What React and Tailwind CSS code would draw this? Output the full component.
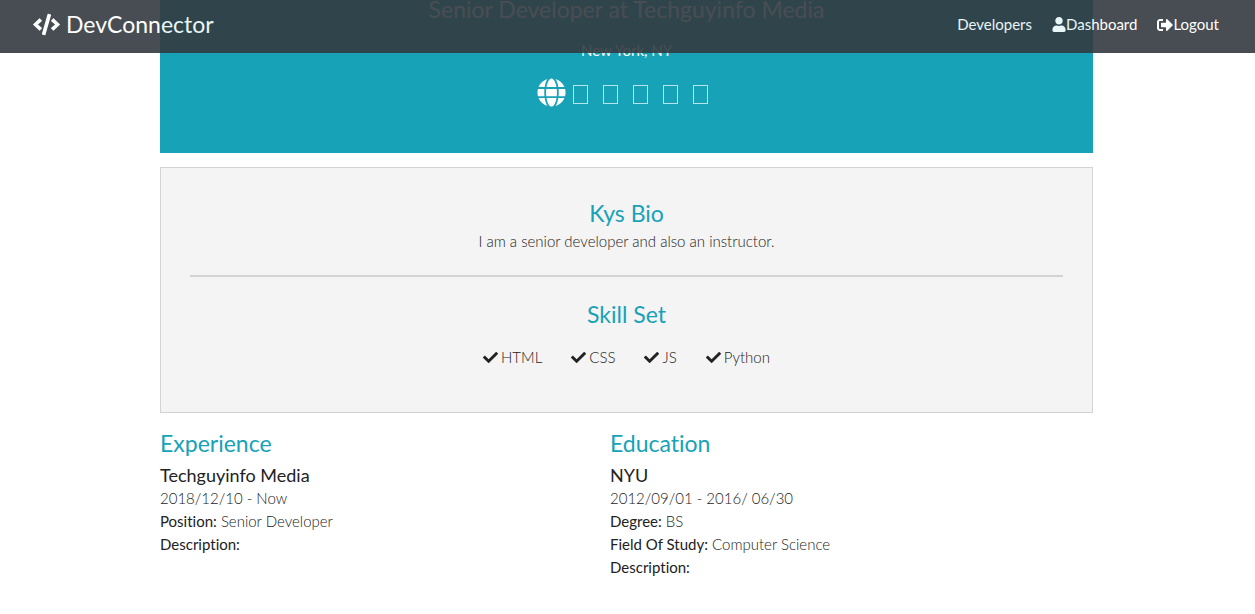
import { FaCheck, FaCode, FaGlobe, FaSignOutAlt, FaUser } from 'react-icons/fa'

const SKILLS = ['HTML', 'CSS', 'JS', 'Python']

const SOCIAL = ['Twitter', 'Facebook', 'LinkedIn', 'YouTube', 'Instagram']

const EXPERIENCE = {
  title: 'Techguyinfo Media',
  dates: '2018/12/10 - Now',
  fields: [
    { label: 'Position', value: 'Senior Developer' },
    { label: 'Description', value: '' },
  ],
}

const EDUCATION = {
  title: 'NYU',
  dates: '2012/09/01 - 2016/ 06/30',
  fields: [
    { label: 'Degree', value: 'BS' },
    { label: 'Field Of Study', value: 'Computer Science' },
    { label: 'Description', value: '' },
  ],
}

function Navbar() {
  return (
    <nav className="fixed inset-x-0 top-0 z-10 flex h-[53px] items-center justify-between bg-[#343a40] pl-[33px] pr-9 pb-1 font-normal text-white opacity-90">
      <h1>
        <a href="#home" className="flex items-center gap-1.5 text-[23px]">
          <FaCode className="size-[27px]" /> DevConnector
        </a>
      </h1>
      <ul className="flex items-center gap-5 text-[15px]">
        <li><a href="#developers">Developers</a></li>
        <li><a href="#dashboard" className="flex items-center"><FaUser className="h-[15px] w-3.5" />Dashboard</a></li>
        <li><a href="#logout" className="flex items-center"><FaSignOutAlt className="size-4" />Logout</a></li>
      </ul>
    </nav>
  )
}

function ProfileTop() {
  return (
    <section className="flex flex-col items-center bg-[#17a2b8] pb-[46px] font-normal text-white">
      <p className="text-[23px] leading-[18px]">Senior Developer at Techguyinfo Media</p>
      <p className="mt-5 text-[15px] leading-6">New York, NY</p>
      <div className="mt-4 flex items-center gap-[7px] pr-2">
        <a href="#website" aria-label="Website"><FaGlobe className="size-[29px]" /></a>
        <div className="flex gap-[15px]">
          {SOCIAL.map((name) => (
            <a key={name} href="#social" aria-label={name} className="mt-1 h-[19px] w-[15px] border border-white/70" />
          ))}
        </div>
      </div>
    </section>
  )
}

function ProfileAbout() {
  return (
    <section className="mt-3.5 border border-[#d3d3d3] bg-[#f4f4f4] px-[29px] pt-[31px] pb-[43px] text-center">
      <h2 className="text-[23px] leading-7 font-normal text-[#17a2b8]">Kys Bio</h2>
      <p className="mt-0.5 text-[15px] leading-6">I am a senior developer and also an instructor.</p>
      <hr className="mt-[22px] mb-[23px] border-t-2 border-[#d3d3d3]" />
      <h2 className="text-[23px] leading-7 font-normal text-[#17a2b8]">Skill Set</h2>
      <ul className="mt-[17px] flex justify-center gap-[29px]">
        {SKILLS.map((skill) => (
          <li key={skill} className="flex items-center gap-[3px] text-[15px] leading-6">
            <FaCheck className="size-[15px]" /> {skill}
          </li>
        ))}
      </ul>
    </section>
  )
}

function Record({ heading, record }) {
  return (
    <section>
      <h2 className="mb-1.5 text-[23px] leading-7 font-normal text-[#17a2b8]">{heading}</h2>
      <h3 className="text-lg leading-6 font-normal">{record.title}</h3>
      <p className="text-[15px] leading-[23px]">{record.dates}</p>
      {record.fields.map((field) => (
        <p key={field.label} className="text-[15px] leading-[23px]">
          <strong className="font-normal">{field.label}:</strong> {field.value}
        </p>
      ))}
    </section>
  )
}

export default function App() {
  return (
    <div className="min-h-screen bg-white pr-0.5 font-['Lato',sans-serif] font-light text-[#222222] [font-variant-ligatures:none]">
      <Navbar />
      <main className="mx-auto max-w-[933px]">
        <ProfileTop />
        <ProfileAbout />
        <div className="mt-4 grid grid-cols-2 pr-[33px]">
          <Record heading="Experience" record={EXPERIENCE} />
          <Record heading="Education" record={EDUCATION} />
        </div>
      </main>
    </div>
  )
}
